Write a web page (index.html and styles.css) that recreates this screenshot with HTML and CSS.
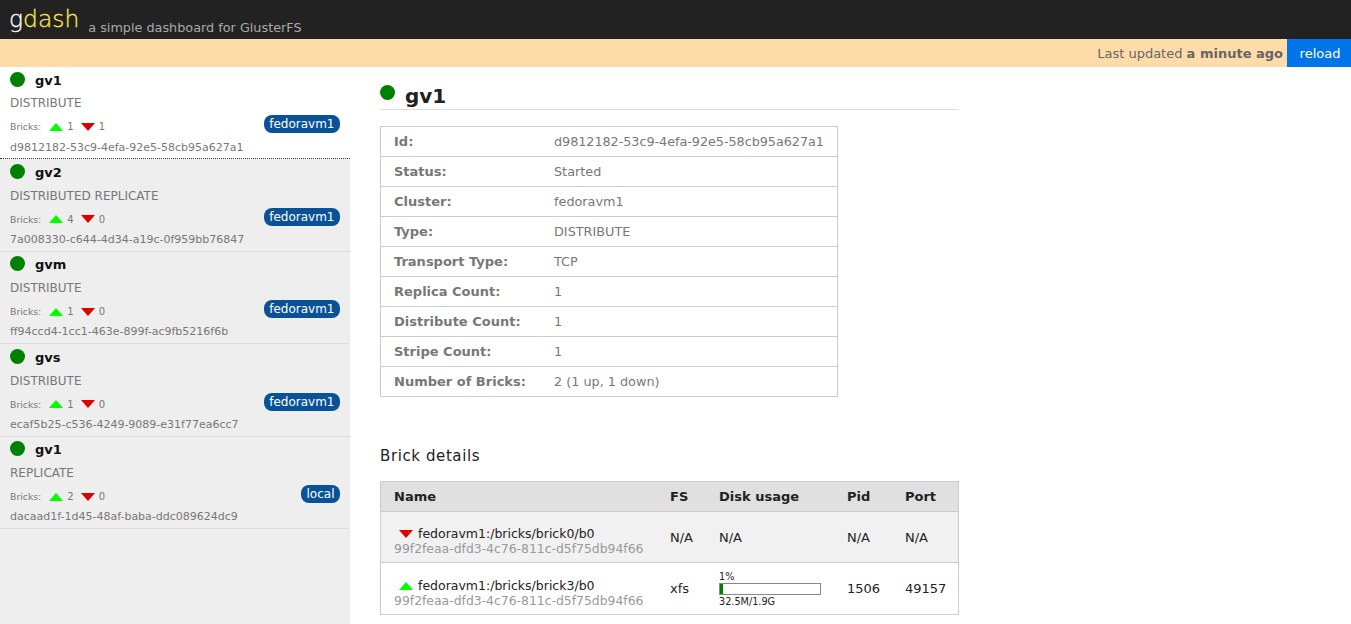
FILE: index.html
```html
<!DOCTYPE html>
<html lang="en">
<head>
    <meta charset="UTF-8">
    <title>gdash</title>
    <link rel="stylesheet" href="styles.css">
</head>
<body>

<header class="header">
    <span class="logo"><span class="logo-g">g</span><span class="logo-dash">dash</span></span>
    <span class="tagline">a simple dashboard for GlusterFS</span>
</header>

<div class="statusbar">
    <span class="updated">Last updated <b>a minute ago</b></span>
    <button class="reload" type="button">reload</button>
</div>

<div class="main">
    <aside class="sidebar">
        <div class="volume active">
            <div class="vol-name"><span class="dot"></span><b>gv1</b></div>
            <div class="vol-type">DISTRIBUTE</div>
            <div class="vol-bricks">
                <span class="bricks-label">Bricks:</span>
                <svg class="tri" viewBox="0 0 14 8"><path d="M7 0 14 8H0z" fill="#0f0"/></svg><span class="num">1</span>
                <svg class="tri" viewBox="0 0 14 8"><path d="M0 0H14L7 8z" fill="#e00000"/></svg><span class="num">1</span>
                <span class="pill">fedoravm1</span>
            </div>
            <div class="vol-id">d9812182-53c9-4efa-92e5-58cb95a627a1</div>
        </div>
        <div class="volume">
            <div class="vol-name"><span class="dot"></span><b>gv2</b></div>
            <div class="vol-type">DISTRIBUTED REPLICATE</div>
            <div class="vol-bricks">
                <span class="bricks-label">Bricks:</span>
                <svg class="tri" viewBox="0 0 14 8"><path d="M7 0 14 8H0z" fill="#0f0"/></svg><span class="num">4</span>
                <svg class="tri" viewBox="0 0 14 8"><path d="M0 0H14L7 8z" fill="#e00000"/></svg><span class="num">0</span>
                <span class="pill">fedoravm1</span>
            </div>
            <div class="vol-id">7a008330-c644-4d34-a19c-0f959bb76847</div>
        </div>
        <div class="volume">
            <div class="vol-name"><span class="dot"></span><b>gvm</b></div>
            <div class="vol-type">DISTRIBUTE</div>
            <div class="vol-bricks">
                <span class="bricks-label">Bricks:</span>
                <svg class="tri" viewBox="0 0 14 8"><path d="M7 0 14 8H0z" fill="#0f0"/></svg><span class="num">1</span>
                <svg class="tri" viewBox="0 0 14 8"><path d="M0 0H14L7 8z" fill="#e00000"/></svg><span class="num">0</span>
                <span class="pill">fedoravm1</span>
            </div>
            <div class="vol-id">ff94ccd4-1cc1-463e-899f-ac9fb5216f6b</div>
        </div>
        <div class="volume">
            <div class="vol-name"><span class="dot"></span><b>gvs</b></div>
            <div class="vol-type">DISTRIBUTE</div>
            <div class="vol-bricks">
                <span class="bricks-label">Bricks:</span>
                <svg class="tri" viewBox="0 0 14 8"><path d="M7 0 14 8H0z" fill="#0f0"/></svg><span class="num">1</span>
                <svg class="tri" viewBox="0 0 14 8"><path d="M0 0H14L7 8z" fill="#e00000"/></svg><span class="num">0</span>
                <span class="pill">fedoravm1</span>
            </div>
            <div class="vol-id">ecaf5b25-c536-4249-9089-e31f77ea6cc7</div>
        </div>
        <div class="volume">
            <div class="vol-name"><span class="dot"></span><b>gv1</b></div>
            <div class="vol-type">REPLICATE</div>
            <div class="vol-bricks">
                <span class="bricks-label">Bricks:</span>
                <svg class="tri" viewBox="0 0 14 8"><path d="M7 0 14 8H0z" fill="#0f0"/></svg><span class="num">2</span>
                <svg class="tri" viewBox="0 0 14 8"><path d="M0 0H14L7 8z" fill="#e00000"/></svg><span class="num">0</span>
                <span class="pill">local</span>
            </div>
            <div class="vol-id">dacaad1f-1d45-48af-baba-ddc089624dc9</div>
        </div>
    </aside>

    <section class="content">
        <h1 class="title"><span class="dot"></span>gv1</h1>

        <table class="info">
            <tr><th>Id:</th><td class="uuid">d9812182-53c9-4efa-92e5-58cb95a627a1</td></tr>
            <tr><th>Status:</th><td>Started</td></tr>
            <tr><th>Cluster:</th><td>fedoravm1</td></tr>
            <tr><th>Type:</th><td>DISTRIBUTE</td></tr>
            <tr><th>Transport Type:</th><td>TCP</td></tr>
            <tr><th>Replica Count:</th><td>1</td></tr>
            <tr><th>Distribute Count:</th><td>1</td></tr>
            <tr><th>Stripe Count:</th><td>1</td></tr>
            <tr><th>Number of Bricks:</th><td>2 (1 up, 1 down)</td></tr>
        </table>

        <h2 class="subtitle">Brick details</h2>

        <table class="bricks">
            <thead>
                <tr><th class="col-name">Name</th><th class="col-fs">FS</th><th class="col-disk">Disk usage</th><th class="col-pid">Pid</th><th class="col-port">Port</th></tr>
            </thead>
            <tbody>
                <tr class="down">
                    <td class="brick-cell">
                        <div class="brick-name"><svg class="tri" viewBox="0 0 14 8"><path d="M0 0H14L7 8z" fill="#e00000"/></svg>fedoravm1:/bricks/brick0/b0</div>
                        <div class="brick-id">99f2feaa-dfd3-4c76-811c-d5f75db94f66</div>
                    </td>
                    <td>N/A</td><td>N/A</td><td>N/A</td><td>N/A</td>
                </tr>
                <tr class="up">
                    <td class="brick-cell">
                        <div class="brick-name"><svg class="tri" viewBox="0 0 14 8"><path d="M7 0 14 8H0z" fill="#0f0"/></svg>fedoravm1:/bricks/brick3/b0</div>
                        <div class="brick-id">99f2feaa-dfd3-4c76-811c-d5f75db94f66</div>
                    </td>
                    <td>xfs</td>
                    <td>
                        <div class="usage-label">1%</div>
                        <div class="usage-bar"><div class="usage-fill" style="width: 1%"></div></div>
                        <div class="usage-label">32.5M/1.9G</div>
                    </td>
                    <td>1506</td><td>49157</td>
                </tr>
            </tbody>
        </table>
    </section>
</div>

</body>
</html>
```

FILE: styles.css
```css
body {
    font-family: 'DejaVu Sans', sans-serif;
    font-size: 13px;
    color: #222;
    background-color: #fff;
    margin: 0;
    height: 624px;
    overflow: hidden;
}

.header {
    background-color: #222;
    height: 39px;
    display: flex;
    align-items: flex-end;
    padding-left: 9px;
}

.logo {
    font-size: 23.4px;
    font-weight: 200;
    line-height: 39px;
    margin-right: 9px;
    -webkit-text-stroke: 0.3px currentColor;
}

.logo-g {
    color: #fff;
}

.logo-dash {
    color: #ffe64d;
}

.tagline {
    font-size: 12.8px;
    color: #aaa;
    line-height: 22px;
}

.statusbar {
    background-color: #fddcaa;
    height: 28px;
    display: flex;
    justify-content: flex-end;
    align-items: center;
}

.updated {
    color: #666;
    margin-right: 4px;
}

.reload {
    background-color: #0074e8;
    color: #fff;
    border: none;
    height: 28px;
    width: 64px;
    padding: 0 0 0 2px;
    font-family: inherit;
    font-size: 13px;
    cursor: pointer;
}

.main {
    display: flex;
    height: 557px;
}

.sidebar {
    width: 350px;
    flex: none;
    background-color: #eee;
}

.volume {
    box-sizing: border-box;
    height: 92.4px;
    padding: 4.6px 10px 0;
    border-bottom: 1px solid #ddd;
}

.volume.active {
    background-color: #fff;
    border-bottom: 1px dotted #333;
}

.dot {
    display: inline-block;
    flex: none;
    width: 15px;
    height: 15px;
    border-radius: 50%;
    background-color: green;
}

.vol-name {
    display: flex;
    align-items: center;
    height: 15px;
    color: #111;
}

.vol-name b {
    margin-top: 2px;
}

.vol-name .dot {
    margin-right: 10px;
}

.vol-type {
    font-size: 12px;
    color: #777;
    margin-top: 7.8px;
    line-height: 18px;
}

.vol-bricks {
    display: flex;
    align-items: center;
    height: 18px;
    margin-top: 5.6px;
    font-size: 10px;
    color: #777;
}

.bricks-label {
    font-size: 9.3px;
    margin-right: 8px;
}

.vol-bricks .tri {
    width: 14px;
    height: 8px;
    margin-right: 4px;
}

.num {
    margin-right: 7px;
}

.pill {
    margin-left: auto;
    margin-top: -5px;
    background-color: #0a5297;
    color: #fff;
    font-size: 12px;
    line-height: 18px;
    padding: 0 5.5px;
    border-radius: 8px;
}

.vol-id {
    font-size: 11px;
    color: #777;
    line-height: 14px;
    margin-top: 4.6px;
}

.content {
    padding: 16px 0 0 30px;
    width: 579px;
}

.title {
    margin: 0 0 16px;
    font-size: 20px;
    line-height: 26px;
    color: #222;
    border-bottom: 1px solid #ddd;
    display: flex;
    align-items: flex-start;
}

.title .dot {
    margin-right: 10px;
    margin-top: 2px;
}

table {
    border-collapse: collapse;
    table-layout: fixed;
}

.info {
    width: 458px;
    border: 1px solid #ccc;
}

.info th,
.info td {
    border: 1px solid #ccc;
    border-width: 1px 0;
    height: 29px;
    padding: 0 0 0 13px;
    text-align: left;
    font-size: 12.8px;
    color: #777;
    font-weight: normal;
}

.info th {
    font-size: 13px;
    font-weight: bold;
    width: 147px;
}

.info .uuid {
    letter-spacing: -0.05px;
}

.subtitle {
    margin: 49px 0 15px;
    font-size: 15px;
    font-weight: normal;
    letter-spacing: 0.6px;
    color: #222;
    line-height: 20px;
}

.bricks {
    width: 579px;
    border: 1px solid #ccc;
}

.bricks th {
    background-color: #e0e0e0;
    height: 29px;
    padding: 0 0 0 13px;
    text-align: left;
}

.bricks td {
    padding: 0 0 0 13px;
    height: 50px;
    border-top: 1px solid #ccc;
}

.bricks .down td {
    background-color: #f1f1f1;
}

.bricks .up td {
    height: 51px;
}

.bricks .brick-cell {
    padding-top: 7px;
    box-sizing: border-box;
}

.bricks .up .brick-cell {
    padding-top: 9px;
}

.col-name {
    width: 263px;
}

.col-fs {
    width: 36px;
}

.col-disk {
    width: 115px;
}

.col-pid {
    width: 45px;
}

.brick-name {
    font-size: 12.5px;
    line-height: 15px;
    white-space: nowrap;
}

.brick-name .tri {
    width: 14px;
    height: 8px;
    margin: 0 5px;
}

.brick-id {
    font-size: 12.4px;
    line-height: 15px;
    color: #999;
    white-space: nowrap;
}

.usage-label {
    font-size: 9.7px;
    line-height: 11px;
}

.usage-bar {
    box-sizing: border-box;
    width: 102px;
    height: 12px;
    border: 1px solid #888;
    margin: 1px 0;
}

.usage-fill {
    height: 100%;
    min-width: 3px;
    background-color: green;
}
```
